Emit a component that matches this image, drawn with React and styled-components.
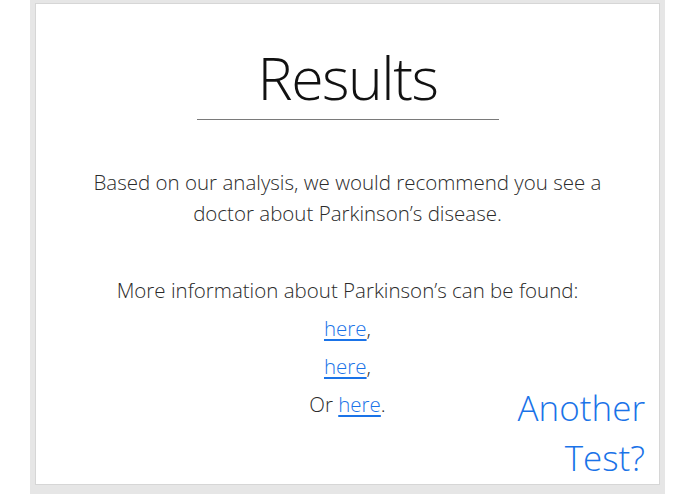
import React from "react";
import styled, { createGlobalStyle } from "styled-components";

const GlobalStyle = createGlobalStyle`
  html, body {
    margin: 0;
    padding: 0;
    background: #ffffff;
  }
  body {
    font-family: "Open Sans", "Liberation Sans", sans-serif;
  }
`;

const Frame = styled.div`
  margin-left: 30px;
  width: 635px;
  height: 494px;
  box-sizing: border-box;
  padding: 3px 5px 9px 5px;
  background: #e6e6e6;
`;

const Card = styled.main`
  height: 100%;
  box-sizing: border-box;
  background: #ffffff;
  border: 1px solid #d6d6d6;
  padding: 0 14px 0 14px;
  display: flex;
  flex-direction: column;
  align-items: center;
  color: #2b2b2b;
  font-weight: 300;
`;

const Title = styled.h1`
  margin: 31px 0 0;
  font-size: 59px;
  font-weight: 300;
  line-height: 84px;
  color: #111111;
  letter-spacing: -1.5px;
`;

const Rule = styled.hr`
  width: 302px;
  margin: 0;
  border: none;
  border-top: 1px solid #7a7a7a;
`;

const Paragraph = styled.p`
  margin: ${props => props.top || 0}px 0 0;
  font-size: 20.5px;
  line-height: 31px;
  text-align: center;
  max-width: 530px;
`;

const LinkLine = styled.div`
  margin-top: ${props => props.top || 0}px;
  font-size: 20.5px;
  line-height: 38px;
  text-align: center;
`;

const Link = styled.a`
  color: #1a73e8;
  text-decoration: underline;
  text-underline-offset: 3px;
  cursor: pointer;
`;

const Footer = styled.div`
  align-self: stretch;
  display: grid;
  grid-template-columns: 1fr auto 1fr;
  align-items: start;
`;

const AnotherButton = styled.button`
  justify-self: end;
  margin-top: -2px;
  padding: 0;
  border: none;
  background: none;
  font-family: inherit;
  font-weight: 300;
  font-size: 35px;
  line-height: 50px;
  text-align: right;
  color: #1a73e8;
  cursor: pointer;
`;

export default function App() {
  return (
    <>
      <GlobalStyle />
      <Frame>
        <Card>
          <Title>Results</Title>
          <Rule />
          <Paragraph top={47}>
            Based on our analysis, we would recommend you see a doctor about
            Parkinson’s disease.
          </Paragraph>
          <Paragraph top={46}>
            More information about Parkinson’s can be found:
          </Paragraph>
          <LinkLine top={3}>
            <Link>here</Link>,
          </LinkLine>
          <LinkLine>
            <Link>here</Link>,
          </LinkLine>
          <Footer>
            <span />
            <LinkLine>
              Or <Link>here</Link>.
            </LinkLine>
            <AnotherButton>
              Another
              <br />
              Test?
            </AnotherButton>
          </Footer>
        </Card>
      </Frame>
    </>
  );
}
